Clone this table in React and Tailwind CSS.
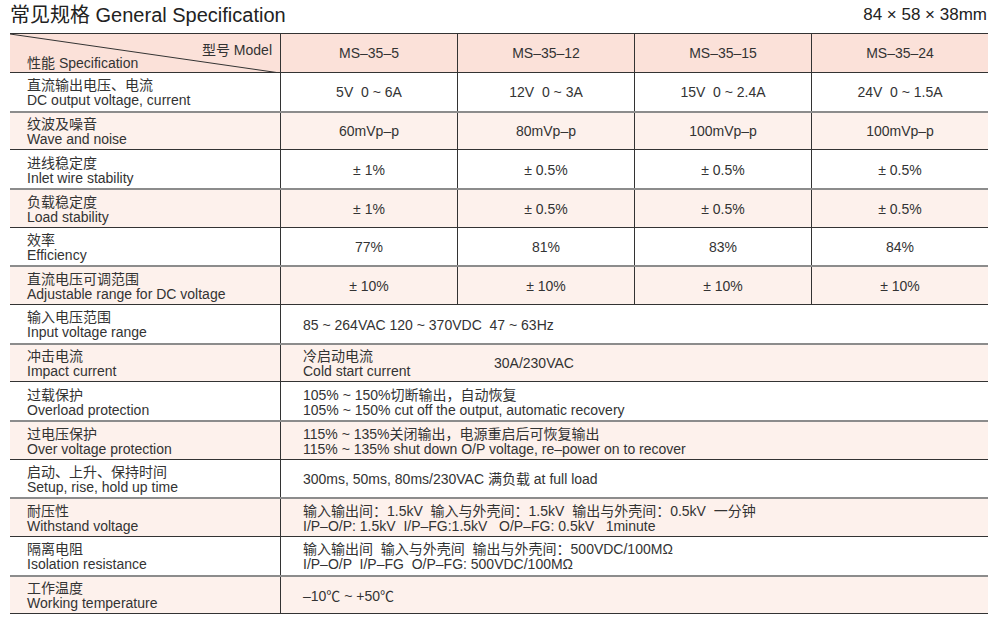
import React from "react";

const F = { fontFamily: '"Liberation Sans", "Noto Sans CJK SC", sans-serif' };

const topRows = [
  { zh: "直流输出电压、电流", en: "DC output voltage, current", v: ["5V  0 ~ 6A", "12V  0 ~ 3A", "15V  0 ~ 2.4A", "24V  0 ~ 1.5A"] },
  { zh: "纹波及噪音", en: "Wave and noise", v: ["60mVp–p", "80mVp–p", "100mVp–p", "100mVp–p"] },
  { zh: "进线稳定度", en: "Inlet wire stability", v: ["± 1%", "± 0.5%", "± 0.5%", "± 0.5%"] },
  { zh: "负载稳定度", en: "Load stability", v: ["± 1%", "± 0.5%", "± 0.5%", "± 0.5%"] },
  { zh: "效率", en: "Efficiency", v: ["77%", "81%", "83%", "84%"] },
  { zh: "直流电压可调范围", en: "Adjustable range for DC voltage", v: ["± 10%", "± 10%", "± 10%", "± 10%"] },
];

const spanRows = [
  { zh: "输入电压范围", en: "Input voltage range", lines: ["85 ~ 264VAC 120 ~ 370VDC  47 ~ 63Hz"] },
  { zh: "冲击电流", en: "Impact current", impact: true },
  { zh: "过载保护", en: "Overload protection", lines: ["105% ~ 150%切断输出，自动恢复", "105% ~ 150% cut off the output, automatic recovery"] },
  { zh: "过电压保护", en: "Over voltage protection", lines: ["115% ~ 135%关闭输出，电源重启后可恢复输出", "115% ~ 135% shut down O/P voltage, re–power on to recover"] },
  { zh: "启动、上升、保持时间", en: "Setup, rise, hold up time", lines: ["300ms, 50ms, 80ms/230VAC 满负载 at full load"] },
  { zh: "耐压性", en: "Withstand voltage", lines: ["输入输出间：1.5kV  输入与外壳间：1.5kV  输出与外壳间：0.5kV  一分钟", "I/P–O/P: 1.5kV  I/P–FG:1.5kV   O/P–FG: 0.5kV   1minute"] },
  { zh: "隔离电阻", en: "Isolation resistance", lines: ["输入输出间  输入与外壳间  输出与外壳间：500VDC/100MΩ", "I/P–O/P  I/P–FG  O/P–FG: 500VDC/100MΩ"] },
  { zh: "工作温度", en: "Working temperature", lines: ["–10℃ ~ +50℃"] },
];

function Label({ zh, en }) {
  return (
    <div className="flex flex-col justify-center pl-[17px] pt-[3px] leading-[15px] text-[14px]">
      <span>{zh}</span>
      <span>{en}</span>
    </div>
  );
}

function rowClass(i) {
  const pink = i % 2 === 1;
  return pink
    ? "bg-[#fdf1ec] border-t-2 border-[#8c8c8c]"
    : "bg-white border-t border-[#333]";
}

export default function App() {
  const models = ["MS–35–5", "MS–35–12", "MS–35–15", "MS–35–24"];
  let idx = 0;
  return (
    <div className="w-[1000px] h-[618px] bg-white text-[#333] px-[10px] overflow-hidden" style={F}>
      <div className="h-[33px] flex items-center justify-between pr-[3px]">
        <span className="text-[20px] text-[#222] -mt-[4px]">常见规格 General Specification</span>
        <span className="text-[17px] text-[#222] -mt-[4px]">84 × 58 × 38mm</span>
      </div>
      <div className="w-[978px]">
        <div className="grid grid-cols-[270px_177px_177px_177px_177px] h-[39px] bg-[#fbe1d9] border-t border-[#333]">
          <div className="relative text-[14px]">
            <svg className="absolute inset-0" width="270" height="39" viewBox="0 0 270 39">
              <line x1="0" y1="0" x2="270" y2="39" stroke="#333" strokeWidth="1" />
            </svg>
            <span className="absolute right-[8px] top-[6px]">型号 Model</span>
            <span className="absolute left-[17px] top-[19px]">性能 Specification</span>
          </div>
          {models.map((m) => (
            <div key={m} className="border-l border-[#333] flex items-center justify-center text-[14px]">{m}</div>
          ))}
        </div>
        {topRows.map((r) => {
          const i = idx++;
          return (
            <div key={r.en} className={`grid grid-cols-[270px_177px_177px_177px_177px] h-[38.67px] ${rowClass(i)}`}>
              <Label zh={r.zh} en={r.en} />
              {r.v.map((v, j) => (
                <div key={j} className="border-l border-[#333] flex items-center justify-center text-[14px] whitespace-pre pt-[2px]">{v}</div>
              ))}
            </div>
          );
        })}
        {spanRows.map((r) => {
          const i = idx++;
          return (
            <div key={r.en} className={`grid grid-cols-[270px_708px] h-[38.67px] ${rowClass(i)}`}>
              <Label zh={r.zh} en={r.en} />
              <div className="border-l border-[#333] flex flex-col justify-center pl-[22px] pt-[3px] text-[14px] leading-[15px] whitespace-pre">
                {r.impact ? (
                  <div className="flex items-center">
                    <div className="flex flex-col w-[191px]">
                      <span>冷启动电流</span>
                      <span>Cold start current</span>
                    </div>
                    <span className="-mt-[2px]">30A/230VAC</span>
                  </div>
                ) : (
                  r.lines.map((l) => <span key={l}>{l}</span>)
                )}
              </div>
            </div>
          );
        })}
        <div className="border-t border-[#333]" />
      </div>
    </div>
  );
}
